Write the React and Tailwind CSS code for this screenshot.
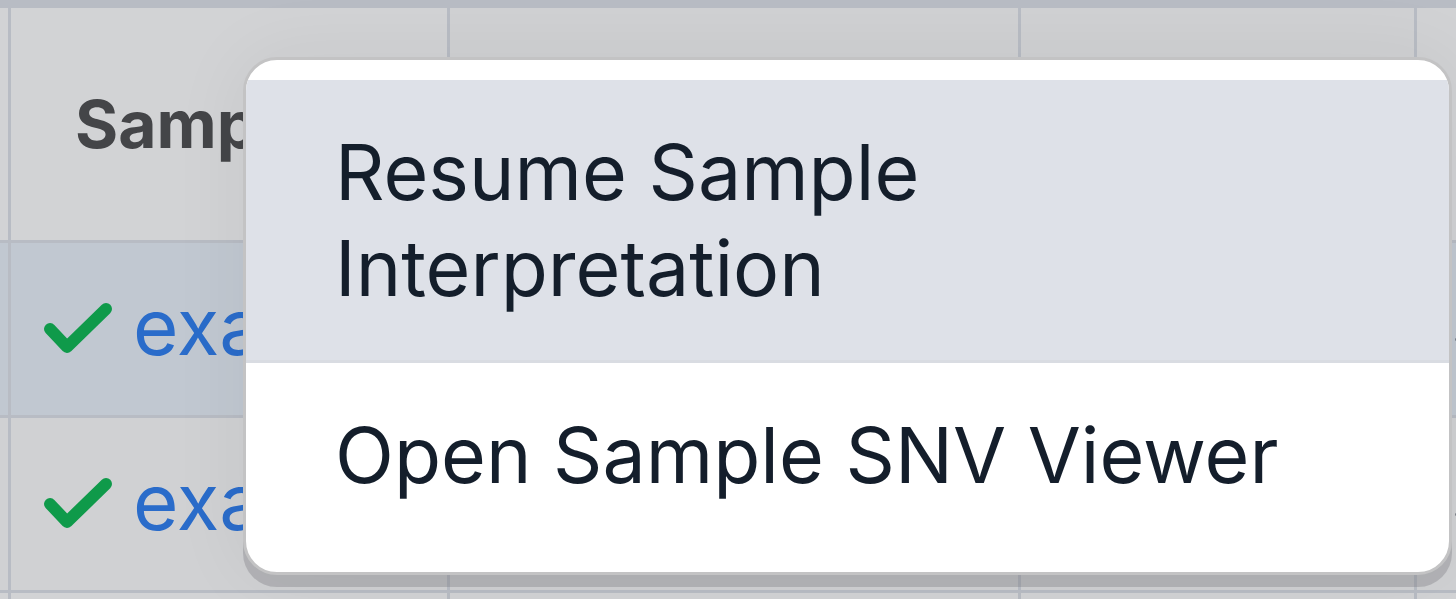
import React from "react";

function Check() {
  return (
    <svg width="68" height="52" viewBox="0 0 68 52" fill="none" className="shrink-0">
      <path d="M6 26 L23 44 L62 6" stroke="#0f9a4a" strokeWidth="12" strokeLinecap="round" strokeLinejoin="round" />
    </svg>
  );
}

function RowCells({ bg }) {
  return (
    <>
      <div className={bg}></div>
      <div className={`${bg} flex items-center pl-[33px] gap-[21px] overflow-hidden whitespace-nowrap`}>
        <Check />
        <span className="text-[78px] leading-none text-[#2a6cca] pb-[4px]">example_sample_01</span>
      </div>
      <div className={bg}></div>
      <div className={bg}></div>
      <div className={`${bg} flex items-center pl-[35px] overflow-hidden`}>
        <span className="text-[56px] leading-none text-[#1b2430]">3</span>
      </div>
    </>
  );
}

export default function App() {
  return (
    <div
      className="relative w-[1456px] h-[599px] overflow-hidden bg-[#d2d3d5]"
      style={{ fontFamily: "Inter, 'Noto Sans', sans-serif" }}
    >
      <div className="grid grid-cols-[8px_436px_568px_393px_1fr] grid-rows-[5px_232px_172px_172px_40px] gap-[3px] bg-[#b8bcc4]">
        <div></div>
        <div></div>
        <div></div>
        <div></div>
        <div></div>

        <div className="bg-[#d2d3d5]"></div>
        <div className="bg-[#d2d3d5] flex items-center pl-[64px] overflow-hidden whitespace-nowrap">
          <span className="text-[66px] leading-none font-bold text-[#444548]">Sample Name</span>
        </div>
        <div className="bg-[#d0d1d3]"></div>
        <div className="bg-[#d0d1d3]"></div>
        <div className="bg-[#d1d2d4]"></div>

        <RowCells bg="bg-[#c1c8d1]" />
        <RowCells bg="bg-[#d0d1d3]" />

        <div className="bg-[#d2d3d5]"></div>
        <div className="bg-[#d2d3d5]"></div>
        <div className="bg-[#d2d3d5]"></div>
        <div className="bg-[#d2d3d5]"></div>
        <div className="bg-[#d2d3d5]"></div>
      </div>

      <div className="absolute left-[243px] top-[57px] w-[1209px] rounded-[34px] border-[3px] border-[#c3c3c4] bg-white py-[20px] shadow-[0_12px_0_rgba(120,120,125,0.35),0_0_80px_rgba(0,0,0,0.06)] overflow-hidden">
        <div className="bg-[#dee1e8] pl-[89px] pr-[40px] py-[44px] text-[77px] leading-[96px] text-[#141e2b] border-b-[3px] border-[#d9dce2]">
          Resume Sample
          <br />
          Interpretation
        </div>
        <div className="pl-[89px] pr-[40px] pt-[44px] pb-[49px] text-[77px] leading-[96px] text-[#141e2b]">
          Open Sample SNV Viewer
        </div>
      </div>
    </div>
  );
}
